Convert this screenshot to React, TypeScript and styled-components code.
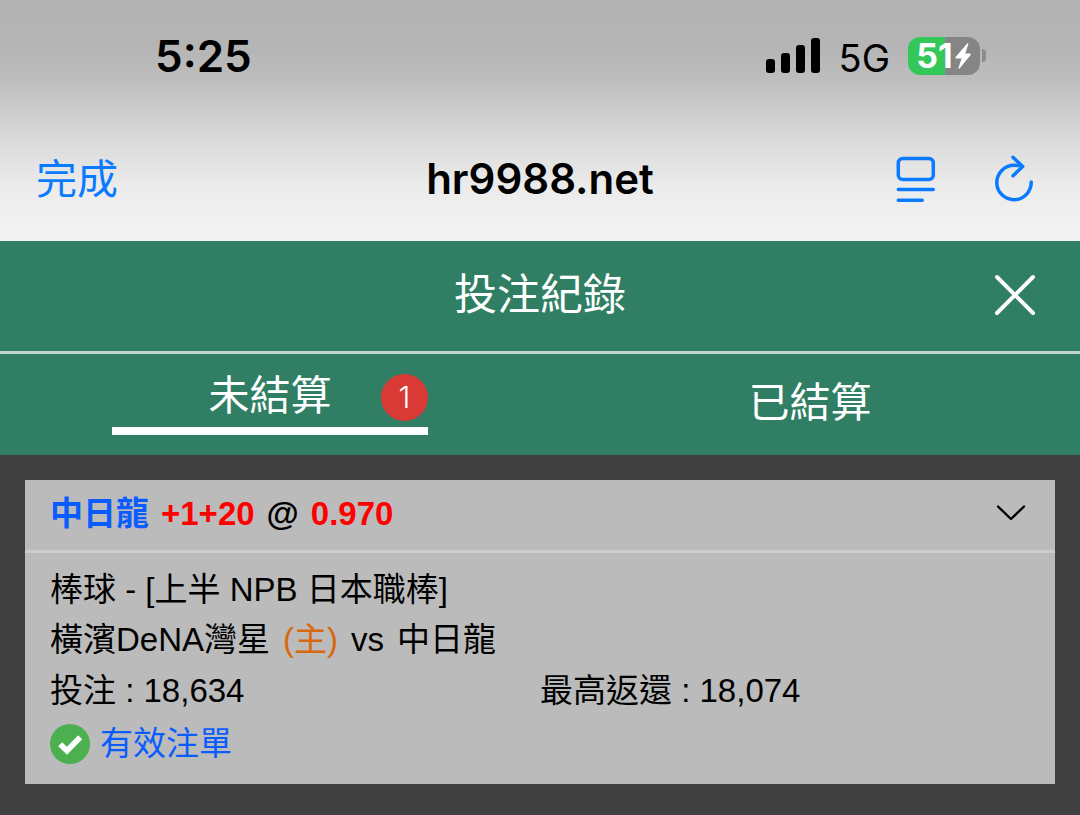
import React from "react";
import styled, { createGlobalStyle } from "styled-components";

const GlobalStyle = createGlobalStyle`
  *, *::before, *::after { box-sizing: border-box; }
  body {
    margin: 0;
    background: #404040;
    color: #000;
    font-family: "Liberation Sans", "Noto Sans CJK TC", sans-serif;
  }
  button { margin: 0; padding: 0; border: 0; background: none; font: inherit; color: inherit; cursor: pointer; }
  svg { display: block; }
`;

const BrowserChrome = styled.header`
  background: linear-gradient(#b2b2b2 0, #b5b5b5 20%, #bebebe 34%, #cdcdcd 46%, #dcdcdc 60%, #ebebeb 77%, #f4f4f4 100%);
  font-family: Inter, "Noto Sans CJK TC", sans-serif;
`;

const StatusBar = styled.div`
  display: flex;
  align-items: center;
  justify-content: space-between;
  height: 115px;
  padding: 0 94px 4px 155px;
`;

const Clock = styled.time`
  font-size: 44px;
  font-weight: 600;
`;

const StatusIcons = styled.div`
  display: flex;
  align-items: center;
`;

const Network = styled.span`
  margin: 4px 18px 0;
  font-size: 38px;
  line-height: 40px;
`;

const Battery = styled.div`
  display: flex;
  align-items: center;
  gap: 2px;
`;

const BatteryBody = styled.div`
  display: flex;
  align-items: center;
  justify-content: center;
  gap: 1px;
  width: 72px;
  height: 38px;
  border-radius: 12px;
  background: linear-gradient(90deg, #34c759 51%, #858585 51%);
  color: #fff;
  font-size: 34px;
  font-weight: 700;
  line-height: 38px;
`;

const BatteryTip = styled.span`
  width: 4px;
  height: 13px;
  border-radius: 0 6px 6px 0;
  background: #8c8c8c;
`;

const AddressBar = styled.div`
  display: grid;
  grid-template-columns: 1fr auto 1fr;
  align-items: center;
  height: 126px;
  padding: 2px 36px 0;
`;

const DoneButton = styled.button`
  justify-self: start;
  color: #0a7aff;
  font-size: 41px;
  line-height: 60px;
`;

const Address = styled.div`
  font-size: 42px;
  font-weight: 600;
  line-height: 60px;
`;

const AddressActions = styled.div`
  display: flex;
  justify-self: end;
  gap: 58px;
  padding-right: 10px;
  color: #0a7aff;
`;

const TitleBar = styled.div`
  display: grid;
  grid-template-columns: 1fr auto 1fr;
  align-items: center;
  height: 113px;
  padding: 0 44px 2px;
  border-bottom: 3px solid #c3d4cc;
  background: #307f64;
  color: #fff;
`;

const Title = styled.h1`
  grid-column: 2;
  margin: 0;
  font-size: 43px;
  font-weight: 400;
  line-height: 60px;
`;

const CloseButton = styled.button`
  justify-self: end;
`;

const Tabs = styled.nav`
  display: grid;
  grid-template-columns: 1fr 1fr;
  height: 101px;
  background: #307f64;
  color: #fff;
`;

const Tab = styled.button<{ $active?: boolean }>`
  position: relative;
  justify-self: center;
  align-self: start;
  width: 316px;
  height: ${(p) => (p.$active ? 81 : 98)}px;
  border-bottom: ${(p) => (p.$active ? "8px solid #fff" : "0")};
  padding-top: ${(p) => (p.$active ? 10 : 0)}px;
  font-size: 41px;
  line-height: 60px;
`;

const Badge = styled.span`
  position: absolute;
  top: 20px;
  right: 0;
  width: 47px;
  height: 47px;
  border-radius: 50%;
  background: #d93a36;
  font-family: Inter, sans-serif;
  font-size: 30px;
  font-weight: 300;
  line-height: 46px;
  text-align: center;
`;

const BetList = styled.main`
  padding: 25px;
`;

const BetCard = styled.article`
  background: #bbb;
  font-size: 33px;
`;

const BetHeader = styled.div`
  display: flex;
  align-items: center;
  justify-content: space-between;
  height: 73px;
  padding: 0 28px 4px 25px;
  border-bottom: 3px solid #cdcdcd;
`;

const Selection = styled.h2`
  display: flex;
  gap: 12px;
  margin: 0;
  padding-top: 2px;
  font-size: 33px;
  font-weight: 700;
  line-height: 50px;
`;

const Team = styled.span`
  color: #0a5cff;
`;

const Odds = styled.span`
  color: #f00;
`;

const BetBody = styled.div`
  padding: 12px 25px 15px;
`;

const Line = styled.p`
  margin: 0;
  line-height: 50px;
`;

const Matchup = styled(Line)`
  display: flex;
  gap: 13px;
`;

const Amounts = styled.div`
  display: grid;
  grid-template-columns: 1fr 1fr;
  padding-top: 1px;
`;

const Home = styled.span`
  color: #d9680c;
`;

const Status = styled.div`
  display: flex;
  align-items: center;
  gap: 10px;
  padding-top: 3px;
  color: #0a5cff;
  line-height: 50px;
`;

export default function App() {
  return (
    <>
      <GlobalStyle />
      <BrowserChrome>
        <StatusBar>
          <Clock>5:25</Clock>
          <StatusIcons>
            <svg width="56" height="36" viewBox="0 0 56 36" aria-hidden="true">
              <rect x="1" y="21" width="9" height="14" rx="3" />
              <rect x="16" y="15" width="9" height="20" rx="3" />
              <rect x="31" y="7" width="9" height="28" rx="3" />
              <rect x="46" y="0" width="9" height="35" rx="3" />
            </svg>
            <Network>5G</Network>
            <Battery>
              <BatteryBody>
                51
                <svg width="18" height="26" viewBox="0 0 18 28" fill="#fff" aria-hidden="true">
                  <path d="M13.5.5 1 15.2c-.6.8-.3 1.6.7 1.6h5.8L4.2 26.6c-.3 1 .6 1.5 1.3.7L17.2 12.8c.6-.8.3-1.6-.7-1.6h-5.1l3.4-10c.3-.9-.7-1.4-1.3-.7z" />
                </svg>
              </BatteryBody>
              <BatteryTip />
            </Battery>
          </StatusIcons>
        </StatusBar>
        <AddressBar>
          <DoneButton>完成</DoneButton>
          <Address>hr9988.net</Address>
          <AddressActions>
            <button aria-label="Page menu">
              <svg width="40" height="48" viewBox="0 0 40 48" fill="none" stroke="currentColor" strokeWidth="3.5" strokeLinecap="round">
                <rect x="2.300" y="3.500" width="35" height="21" rx="4.500" />
                <path d="M2.300 34.500h35M2.300 45.300h24" />
              </svg>
            </button>
            <button aria-label="Reload">
              <svg width="40" height="48" viewBox="0 0 40 48" fill="none" stroke="currentColor" strokeWidth="3.5" strokeLinecap="round" strokeLinejoin="round">
                <path d="M37.200 27A17.200 17.200 0 1 1 20 10.300c3 0 5.500.4 7.500 1" />
                <path d="M19 2.300 28.700 11.500 19 20.800" />
              </svg>
            </button>
          </AddressActions>
        </AddressBar>
      </BrowserChrome>
      <TitleBar>
        <Title>投注紀錄</Title>
        <CloseButton aria-label="Close">
          <svg width="42" height="42" viewBox="0 0 42 42" fill="none" stroke="currentColor" strokeWidth="4" strokeLinecap="round">
            <path d="M3 3l36 36M39 3 3 39" />
          </svg>
        </CloseButton>
      </TitleBar>
      <Tabs>
        <Tab $active>
          未結算<Badge>1</Badge>
        </Tab>
        <Tab>已結算</Tab>
      </Tabs>
      <BetList>
        <BetCard>
          <BetHeader>
            <Selection>
              <Team>中日龍</Team>
              <Odds>+1+20</Odds>
              <span>@</span>
              <Odds>0.970</Odds>
            </Selection>
            <button aria-label="Collapse">
              <svg width="32" height="20" viewBox="0 0 32 20" fill="none" stroke="currentColor" strokeWidth="2.4" strokeLinecap="round" strokeLinejoin="round">
                <path d="M3 3.500l13 12.500L29 3.500" />
              </svg>
            </button>
          </BetHeader>
          <BetBody>
            <Line>棒球 - [上半 NPB 日本職棒]</Line>
            <Matchup>
              <span>橫濱DeNA灣星</span>
              <Home>(主)</Home>
              <span>vs</span>
              <span>中日龍</span>
            </Matchup>
            <Amounts>
              <Line>投注 : 18,634</Line>
              <Line>最高返還 : 18,074</Line>
            </Amounts>
            <Status>
              <svg width="40" height="40" viewBox="0 0 40 40" aria-hidden="true">
                <circle cx="20" cy="20" r="20" fill="#4caf50" />
                <path d="M10.200 20.200l6.800 6.600L30.200 13.300" fill="none" stroke="#fff" strokeWidth="5.600" />
              </svg>
              有效注單
            </Status>
          </BetBody>
        </BetCard>
      </BetList>
    </>
  );
}
